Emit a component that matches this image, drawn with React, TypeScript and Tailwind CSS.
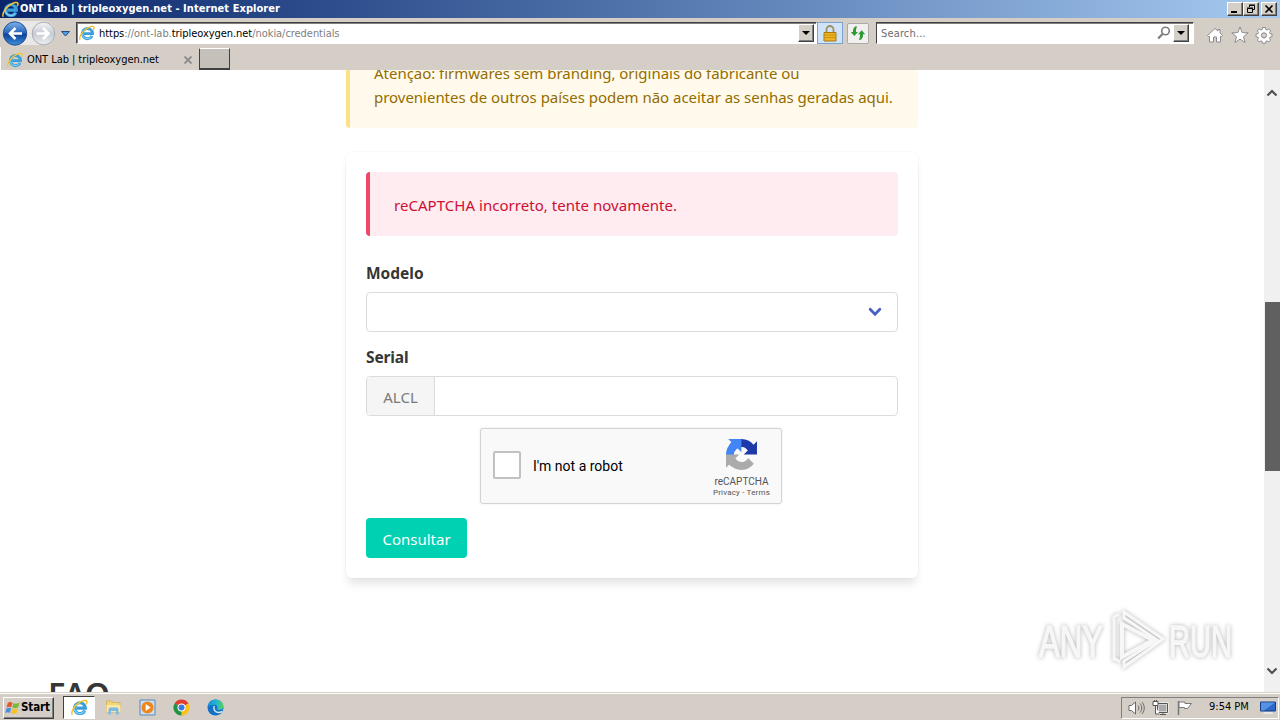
import type { ReactNode } from "react";
import { clsx } from "clsx";

const bevel =
  "border border-t-white border-l-white border-r-[#404040] border-b-[#404040] shadow-[inset_-1px_-1px_0_#808080]";

const IeIcon = ({ size = 16 }: { size?: number }) => (
  <svg width={size} height={size} viewBox="0 0 16 16" fill="none" className="shrink-0">
    <path d="M13 10.800A5.100 5.100 0 1 1 13.500 8.600H5" stroke="#3a9fdd" strokeWidth="2.900" />
    <path d="M12.400 11.600A5.100 5.100 0 0 1 3.200 8.800" stroke="#8ad6f7" strokeWidth="1" />
    <path d="M1.300 14.800C-.6 12.500 3.300 6 8 3.300c3-1.900 6.500-2.600 7-1 .3.900-.3 2-.9 2.800" stroke="#f2c335" strokeWidth="1.400" />
  </svg>
);

const ArrowDown = () => (
  <svg width="8" height="4" viewBox="0 0 8 4">
    <path d="M0 0h8L4 4z" fill="#000" />
  </svg>
);

const RecaptchaLogo = () => (
  <svg width="31" height="31" viewBox="0 0 64 64">
    <path d="M64 31.955l-.033-1.370V4.687l-7.160 7.160C50.948 4.674 42.033.093 32.050.093c-10.400 0-19.622 4.960-25.458 12.640l11.736 11.860a15.550 15.550 0 0 1 4.754-5.334c2.050-1.600 4.952-2.906 8.968-2.906.485 0 .860.057 1.135.163 4.976.393 9.288 3.140 11.828 7.124l-8.307 8.307L64 31.953" fill="#1c3aa9" />
    <path d="M31.862.094l-1.370.033H4.594l7.160 7.160C4.580 13.147 0 22.060 0 32.046c0 10.400 4.960 19.622 12.640 25.458L24.500 45.768a15.550 15.550 0 0 1-5.334-4.754c-1.600-2.050-2.906-4.952-2.906-8.968 0-.485.057-.860.163-1.135.393-4.976 3.140-9.288 7.124-11.828l8.307 8.307L31.860.095" fill="#4285f4" />
    <path d="M.001 32.045l.033 1.370v25.898l7.160-7.160c5.860 7.173 14.774 11.754 24.760 11.754 10.400 0 19.622-4.960 25.458-12.640l-11.736-11.860a15.550 15.550 0 0 1-4.754 5.334c-2.050 1.600-4.952 2.906-8.968 2.906-.485 0-.860-.057-1.135-.163-4.976-.393-9.288-3.140-11.828-7.124l8.307-8.307c-10.522.040-22.400.066-27.295-.005" fill="#ababab" />
  </svg>
);

const WindowButton = ({ children, className }: { children: ReactNode; className?: string }) => (
  <button className={clsx("flex h-[14px] w-4 items-center justify-center bg-[#d4d0c8]", bevel, className)}>
    {children}
  </button>
);

function TitleBar() {
  return (
    <div className="flex h-[18px] items-center bg-linear-to-r from-[#0a246a] to-[#a6caf0] pr-[3px] pl-[2px]">
      <IeIcon size={17} />
      <span className="ml-px pt-px font-['DejaVu_Sans_Condensed','DejaVu_Sans',sans-serif] text-[11px] font-bold tracking-[0.06px] whitespace-nowrap text-white">
        ONT Lab | tripleoxygen.net - Internet Explorer
      </span>
      <div className="ml-auto flex">
        <WindowButton>
          <svg width="12" height="10" viewBox="0 0 12 10"><path d="M2 7h6v2H2z" /></svg>
        </WindowButton>
        <WindowButton>
          <svg width="12" height="10" viewBox="0 0 12 10" fill="none" stroke="#000">
            <path d="M4.500 3V1.500h5v4H8M4 1h6M2.500 4.500h5v4h-5zM2 4h6" />
          </svg>
        </WindowButton>
        <WindowButton className="ml-[2px]">
          <svg width="12" height="10" viewBox="0 0 12 10" stroke="#000" strokeWidth="1.600">
            <path d="M2.500 1.500l7 7M9.500 1.500l-7 7" />
          </svg>
        </WindowButton>
      </div>
    </div>
  );
}

function NavBar() {
  return (
    <div className="flex h-[29px] items-center pt-px">
      <svg width="76" height="28" viewBox="0 0 76 28" className="shrink-0">
        <defs>
          <linearGradient id="back" x1="0" y1="0" x2="0" y2="1">
            <stop offset="0" stopColor="#7fb2ea" />
            <stop offset=".45" stopColor="#2b68bd" />
            <stop offset=".55" stopColor="#0e4297" />
            <stop offset="1" stopColor="#3f93e0" />
          </linearGradient>
          <linearGradient id="forward" x1="0" y1="0" x2="0" y2="1">
            <stop offset="0" stopColor="#f4f6f8" />
            <stop offset=".5" stopColor="#c6cbd2" />
            <stop offset="1" stopColor="#eceff2" />
          </linearGradient>
        </defs>
        <path d="M15 2h28a12 12 0 0 1 0 24H15z" fill="#e9e8e6" />
        <circle cx="15" cy="14.500" r="11.700" fill="url(#back)" stroke="#27508e" />
        <circle cx="43.500" cy="14.500" r="11.300" fill="url(#forward)" stroke="#a9abb0" />
        <path d="M22 14.500H10M15.500 9l-5.500 5.500 5.500 5.500" fill="none" stroke="#fff" strokeWidth="2.600" />
        <path d="M36.500 14.500h12M43 9l5.500 5.500L43 20" fill="none" stroke="#fff" strokeWidth="2.600" />
        <path d="M61.500 12.500h8l-4 4.500z" fill="#4aa3e0" stroke="#1d4e86" />
      </svg>

      <div className="flex h-[22px] w-[741px] items-center border border-t-[#404040] border-r-white border-b-white border-l-[#404040] bg-white pl-[2px] shadow-[inset_1px_1px_0_#808080]">
        <IeIcon />
        <span className="ml-1 pt-[2px] font-['DejaVu_Sans_Condensed','DejaVu_Sans',sans-serif] text-[11px] tracking-[-0.05px] whitespace-nowrap text-[#808080]">
          <span className="text-black">https</span>://ont-lab.<span className="text-black">tripleoxygen.net</span>/nokia/credentials
        </span>
        <button className={clsx("mr-[2px] ml-auto flex h-[18px] w-4 items-center justify-center bg-[#d4d0c8]", bevel)}>
          <ArrowDown />
        </button>
      </div>
      <div className="flex h-[22px] w-[26px] items-center justify-center border border-[#7da2ce] bg-[#cfe3fb]">
        <svg width="14" height="17" viewBox="0 0 14 17">
          <path d="M3.500 8V4.500a3.500 3.500 0 0 1 7 0V8" fill="none" stroke="#a1905c" strokeWidth="1.800" />
          <path d="M1 7.500h12v8.500H1z" fill="#eeb422" stroke="#a8790e" />
          <path d="M2 10h10M2 12.500h10" stroke="#c98f12" />
        </svg>
      </div>
      <div className="ml-[4px] flex h-[21px] w-[22px] items-center justify-center rounded-[2px] border border-[#aaa] bg-[#f1f0ee]">
        <svg width="16" height="16" viewBox="0 0 16 16" fill="#2f9a35">
          <path d="M5 1.500h2.200C5.800 3.500 6 5.500 6 7h2L4.300 11 .8 7H3c-.3-2 .5-4 2-5.500z" />
          <path d="M11 14.800H8.800c1.400-2 1.200-4 1.200-5.500H8L11.700 5.300l3.500 4H13c.3 2-.5 4-2 5.500z" />
        </svg>
      </div>
      <div className="ml-[7px] flex h-[22px] w-[318px] items-center border border-t-[#404040] border-r-white border-b-white border-l-[#404040] bg-white pr-[4px] pl-[4px] shadow-[inset_0_1px_0_#808080]">
        <span className="pt-[2px] font-['DejaVu_Sans_Condensed','DejaVu_Sans',sans-serif] text-[11px] tracking-[0.15px] text-[#6d6d6d]">
          Search...
        </span>
        <svg width="14" height="14" viewBox="0 0 14 14" fill="none" stroke="#7c7c7c" className="ml-auto">
          <circle cx="8.500" cy="5" r="3.800" strokeWidth="1.600" />
          <path d="M5.500 8L1.200 12.500" strokeWidth="2.200" />
        </svg>
        <button className={clsx("ml-[2px] flex h-[18px] w-4 items-center justify-center bg-[#d4d0c8]", bevel)}>
          <ArrowDown />
        </button>
      </div>

      <div className="ml-[12px] flex items-center gap-[6.500px] pt-[3px]">
        <svg width="18" height="18" viewBox="0 0 18 18" fill="#fff" stroke="#8b8b8b">
          <path d="M9 2.500L1.500 9.500l1.300 1.300.7-.5V16h4v-5h3v5h4v-5.700l.7.500 1.300-1.300L14 7V3.500h-2V5z" />
        </svg>
        <svg width="18" height="18" viewBox="0 0 18 18" fill="#fff" stroke="#8b8b8b">
          <path d="M9 1l2.200 5.600 6 .3-4.700 3.800 1.600 5.800L9 13.200l-5.100 3.300 1.600-5.800L.8 6.900l6-.3z" />
        </svg>
        <svg width="18" height="18" viewBox="0 0 18 18" fill="#fff" stroke="#8b8b8b">
          <path d="M7.600 1.500h2.800l.4 2 1.200.5 1.700-1.100 1.900 1.900-1.100 1.700.5 1.200 2 .4v2.700l-2 .4-.5 1.200 1.100 1.700-1.900 1.900-1.700-1.100-1.200.5-.4 2H7.600l-.4-2-1.200-.5L4.300 16l-1.900-1.900 1.100-1.700-.5-1.200-2-.4V8.100l2-.4.5-1.200-1.100-1.700 1.900-1.900L6 4l1.200-.5z" />
          <circle cx="9" cy="9.400" r="2.600" fill="#d4cec7" />
        </svg>
      </div>
    </div>
  );
}

function TabBar() {
  return (
    <div className="flex h-[23px] items-start">
      <div className="flex h-[23px] w-[199px] items-center border-l border-white pt-[2px] pl-[6px]">
        <IeIcon />
        <span className="ml-1 pt-px font-['DejaVu_Sans_Condensed','DejaVu_Sans',sans-serif] text-[11px] tracking-[-0.05px] whitespace-nowrap text-black">
          ONT Lab | tripleoxygen.net
        </span>
        <svg width="8" height="8" viewBox="0 0 8 8" stroke="#8a8a8a" strokeWidth="1.800" className="mr-[7px] ml-auto">
          <path d="M.5.5l7 7M7.500.5l-7 7" />
        </svg>
      </div>
      <div className="mt-px h-[22px] w-[31px] border border-b-2 border-t-white border-r-[#404040] border-b-[#404040] border-l-[#404040] bg-[#c5c0ba]" />
    </div>
  );
}

function Captcha() {
  return (
    <div className="mt-3 ml-[114px] flex h-[76px] w-[302px] items-center rounded-[3px] border border-[#d3d3d3] bg-[#f9f9f9] pr-[11px] pl-3 font-[Roboto,sans-serif] shadow-[0_0_3px_rgba(0,0,0,0.08)]">
      <div className="mb-[2px] h-7 w-7 rounded-[2px] border-2 border-[#c1c1c1] bg-white" />
      <span className="ml-3 text-[14px] text-black">I'm not a robot</span>
      <div className="ml-auto flex flex-col items-center pt-[5px] text-[#555]">
        <RecaptchaLogo />
        <span className="mt-[5px] text-[10px] leading-[13px]">reCAPTCHA</span>
        <span className="text-[8px] leading-[10px] tracking-[0.18px] whitespace-nowrap">Privacy - Terms</span>
      </div>
    </div>
  );
}

function Page() {
  return (
    <main className="flex-1 overflow-hidden bg-white font-['Noto_Sans',sans-serif] text-[15px] text-[#363636]">
      <div className="mx-auto w-[572px]">
        <div className="-mt-8 h-[90px] rounded-[4px] border-l-4 border-[#ffe08a] bg-[#fffaeb] pt-[23px] pl-6 leading-6 tracking-[-0.025px] whitespace-nowrap text-[#946c00]">
          <p>Atenção: firmwares sem branding, originais do fabricante ou</p>
          <p>provenientes de outros países podem não aceitar as senhas geradas aqui.</p>
        </div>

        <div className="mt-6 h-[426px] rounded-[6px] p-5 shadow-[0_8px_8px_-2px_rgba(10,10,10,0.1),0_0_0_1px_rgba(10,10,10,0.02)]">
          <div className="flex h-16 items-center rounded-[4px] border-l-4 border-[#f14668] bg-[#feecf0] pt-[2px] pl-6 tracking-[0.04px] text-[#cc0f35]">
            reCAPTCHA incorreto, tente novamente.
          </div>
          <label className="mt-[25px] block h-[31px] text-[15.500px] leading-6 font-bold">Modelo</label>
          <div className="flex h-10 items-center justify-end rounded-[4px] border border-[#dbdbdb] pr-[15px]">
            <svg width="14" height="10" viewBox="0 0 13 9" fill="none" stroke="#485fc7" strokeWidth="2.600" strokeLinecap="round">
              <path d="M2 2l4.500 4.500L11 2" />
            </svg>
          </div>
          <label className="mt-[13px] block h-[31px] text-[15.500px] leading-6 font-bold tracking-[-0.15px]">Serial</label>
          <div className="flex h-10 overflow-hidden rounded-[4px] border border-[#dbdbdb]">
            <span className="flex w-[68px] items-center justify-center border-r border-[#dbdbdb] bg-[#f5f5f5] pt-[3px] text-[#7a7a7a]">
              ALCL
            </span>
          </div>
          <Captcha />
          <button className="mt-[14px] flex h-10 w-[101px] items-center justify-center rounded-[4px] bg-[#00d1b2] pt-[2px] text-white">
            Consultar
          </button>
        </div>
      </div>
      <h2 className="mt-[98px] ml-12 text-[32px] leading-9 font-semibold tracking-[-0.4px]">FAQ</h2>
    </main>
  );
}

function Scrollbar() {
  return (
    <div className="flex w-4 flex-col items-center bg-[#f0f0f0] pt-[19px] pb-[17px]">
      <svg width="12" height="8" viewBox="0 0 12 8" fill="none" stroke="#505050" strokeWidth="2.200">
        <path d="M1.500 6.500L6 2l4.500 4.500" />
      </svg>
      <div className="mt-[205px] mr-[-1px] h-[169px] w-[15px] bg-[#606060]" />
      <svg width="12" height="8" viewBox="0 0 12 8" fill="none" stroke="#505050" strokeWidth="2.200" className="mt-auto">
        <path d="M1.500 1.500L6 6l4.500-4.500" />
      </svg>
    </div>
  );
}

const Watermark = () => (
  <svg
    width="206"
    height="68"
    viewBox="0 0 206 68"
    className="absolute top-[606px] left-[1032px] drop-shadow-[0_0_2px_rgba(0,0,0,0.3)]"
    fill="#f7f7f7"
  >
    <g fontFamily="Liberation Sans, sans-serif" fontSize="44" stroke="#f7f7f7" strokeWidth="1.500">
      <text x="7" y="51" textLength="64" lengthAdjust="spacingAndGlyphs">ANY</text>
      <text x="137" y="51" textLength="63" lengthAdjust="spacingAndGlyphs">RUN</text>
    </g>
    <g fill="none" stroke="#f7f7f7" strokeWidth="4">
      <path d="M90 18v33l31-17z" />
      <path d="M82 55V11l5-3M82 13v39l6 4M92 6l39 27-39 28V55l33-21L92 12z" strokeWidth="3" />
    </g>
  </svg>
);

function Taskbar() {
  return (
    <footer className="flex h-7 items-center border-t border-[#d4d0c8] pl-[3px] shadow-[inset_0_1px_0_#fff]">
      <button className={clsx("mt-[2px] flex h-[22px] w-[51px] items-center pl-px", bevel)}>
        <svg width="16" height="16" viewBox="0 0 17 16" className="shrink-0">
          <path d="M3 2.500c2-1.200 3.500-1 5-.2L6.700 7.200c-1.600-.8-3-.8-5 .2z" fill="#e5582b" />
          <path d="M9 2.800c2 1 4 .8 6.500-.6l-1.400 5c-2 1.300-4 1.400-6.400.4z" fill="#7cb83c" />
          <path d="M1.500 8.400c2-1 3.400-1 5-.2l-1.300 5c-1.600-.8-3-.8-5 .2z" fill="#4a8ede" />
          <path d="M7.500 8.600c2 1 4 .8 6.300-.4l-1.300 5c-2 1.200-4 1.300-6.300.3z" fill="#f5c12e" />
        </svg>
        <span className="font-['DejaVu_Sans_Condensed','DejaVu_Sans',sans-serif] text-[11.500px] font-bold tracking-[-0.1px] text-black">
          Start
        </span>
      </button>
      <div className="mt-px ml-[9px] flex h-[23px] w-8 items-center justify-center border border-t-[#404040] border-r-white border-b-white border-l-[#404040] bg-white">
        <IeIcon size={17} />
      </div>
      <div className="mt-px ml-[10px] flex items-center gap-[17px]">
        <svg width="17" height="17" viewBox="0 0 17 17">
          <path d="M1.500 2h5l1 1.500h7.500V13H1.500z" fill="#f1d67b" stroke="#d2ad4c" strokeWidth=".8" />
          <path d="M1.500 6h14v7h-14z" fill="#fae9a5" />
          <path d="M3.500 15.500V10.500a2 2 0 0 1 2-2h6a2 2 0 0 1 2 2v5h-2.500v-3.500H6v3.500z" fill="#79b9e4" />
        </svg>
        <svg width="17" height="17" viewBox="0 0 17 17">
          <path d="M1 1h15v15H1z" fill="#cbdff2" stroke="#5a88b8" />
          <circle cx="8.500" cy="8.500" r="6" fill="#f08519" />
          <path d="M6.700 5v7l5-3.500z" fill="#fff" />
        </svg>
        <svg width="17" height="17" viewBox="0 0 17 17">
          <path d="M8.500 8.500L1.570 4.500A8 8 0 0 1 15.430 4.500z" fill="#e33b2e" />
          <path d="M8.500 8.500L15.430 4.500A8 8 0 0 1 8.500 16.500z" fill="#fbc116" />
          <path d="M8.500 8.500V16.500A8 8 0 0 1 1.570 4.500z" fill="#229342" />
          <circle cx="8.500" cy="8.500" r="4" fill="#fff" />
          <circle cx="8.500" cy="8.500" r="3" fill="#3b78e7" />
        </svg>
        <svg width="17" height="17" viewBox="0 0 17 17">
          <defs>
            <linearGradient id="edge" x1="0" y1="0" x2="1" y2="0">
              <stop offset="0" stopColor="#1c8fd8" />
              <stop offset=".55" stopColor="#22b6d0" />
              <stop offset="1" stopColor="#5cd05c" />
            </linearGradient>
          </defs>
          <circle cx="8.500" cy="8.500" r="8" fill="#1470c4" />
          <path d="M.6 8C1 3.500 4.500.500 8.500.500c4.500 0 8 3 8 6.500 0 2.500-2 4-4.300 4-1.500 0-2.500-.5-2.200-1.200 1-1.500.3-4-2.800-4C4.500 5.800 1.500 6.500.6 8z" fill="url(#edge)" />
          <path d="M7.300 7c-1.500 3 .7 6.500 4 6.500 1.500 0 3-.5 4-1.200" fill="none" stroke="#d4e9f4" strokeWidth="1.500" />
        </svg>
      </div>

      <div className="mt-[2px] mr-px ml-auto flex h-[22px] w-[158px] items-center border border-t-[#808080] border-r-white border-b-white border-l-[#808080] pl-[6px]">
        <svg width="17" height="16" viewBox="0 0 17 16" fill="none" stroke="#686868">
          <path d="M1 5.500h2.500l4-3.500v12l-4-3.500H1z" fill="#fff" />
          <path d="M10 5.500c1.200 1.500 1.200 3.500 0 5M12 3.500c2.300 2.500 2.300 6.500 0 9M14 2c3 3.500 3 8.500 0 12" />
        </svg>
        <svg width="17" height="16" viewBox="0 0 17 16" fill="none" stroke="#555" className="ml-[7px]">
          <path d="M5.500 3.500h10v9h-10z" fill="#aaa" stroke="#fff" strokeWidth="2" />
          <path d="M5.500 3.500h10v9h-10zM8 14.500h6M11 13v2" />
          <path d="M1 1.500h5v4H1zM2.500 0v2M4.500 0v2M3.500 6v8h4" fill="#fff" />
        </svg>
        <svg width="17" height="16" viewBox="0 0 17 16" fill="#fff" stroke="#777" className="ml-[7px]">
          <path d="M2.500 1v14" strokeWidth="1.500" />
          <path d="M3 2h6v1.500h6.500L13 6.500l-1.500 2H8.500V7.500H3z" />
        </svg>
        <span className="ml-4 font-['DejaVu_Sans_Condensed','DejaVu_Sans',sans-serif] text-[11px] whitespace-nowrap text-black">9:54 PM</span>
        <svg width="16" height="14" viewBox="0 0 16 14" className="mr-[2px] ml-auto">
          <path d="M.5 1h15v9H.5z" fill="#2b67c6" stroke="#153f86" />
          <path d="M1 1.500h14L4 9.500H1z" fill="#5592e4" />
          <path d="M4 11h8l1 2H3z" fill="#e8e8e8" />
        </svg>
      </div>
    </footer>
  );
}

export default function App() {
  return (
    <div className="relative flex h-[720px] w-[1280px] flex-col overflow-hidden bg-[#d4cec7]">
      <TitleBar />
      <NavBar />
      <TabBar />
      <div className="flex h-[622px] bg-white">
        <Page />
        <Scrollbar />
      </div>
      <Taskbar />
      <Watermark />
    </div>
  );
}
